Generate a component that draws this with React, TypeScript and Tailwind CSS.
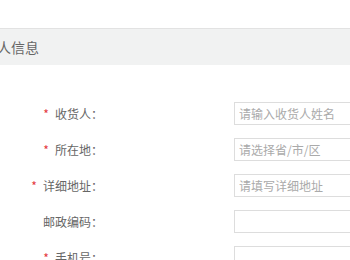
const FONT = "font-['Noto_Sans_CJK_SC','Noto_Sans',sans-serif]";

const ROWS = [
  { label: "收货人", required: true, placeholder: "请输入收货人姓名" },
  { label: "所在地", required: true, placeholder: "请选择省/市/区" },
  { label: "详细地址", required: true, placeholder: "请填写详细地址" },
  { label: "邮政编码", required: false, placeholder: "" },
  { label: "手机号", required: true, placeholder: "" },
];

function Row({ label, required, placeholder }: (typeof ROWS)[number]) {
  return (
    <div className="flex h-[23px] items-center">
      <div className="w-[103px] shrink-0 text-right text-[12px] leading-none text-[#666]">
        {required && <span className="mr-[6px] text-[#e4393c]">*</span>}
        {label}：
      </div>
      <input
        className="ml-[131px] h-[23px] w-[200px] shrink-0 border border-[#ddd] px-[4px] text-[12px] text-[#333] outline-none placeholder:text-[#aaa]"
        placeholder={placeholder}
      />
    </div>
  );
}

export default function App() {
  return (
    <div className={`h-[260px] w-[350px] overflow-hidden bg-white ${FONT}`}>
      <div className="h-[28px]" />
      <div className="flex h-[37px] items-center border-t border-[#e2e2e2] bg-[#f1f2f2]">
        <span className="-ml-[31px] whitespace-nowrap text-[14px] text-[#666]">收货人信息</span>
      </div>
      <div className="flex flex-col gap-[13px] pt-[37px]">
        {ROWS.map((r) => (
          <Row key={r.label} {...r} />
        ))}
      </div>
    </div>
  );
}
